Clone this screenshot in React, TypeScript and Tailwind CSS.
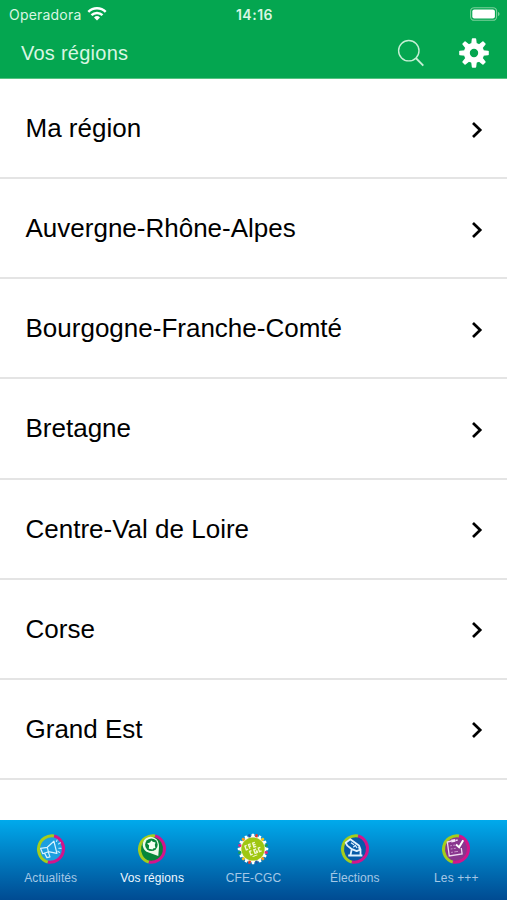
import type { ReactNode } from "react";

const regions = [
  "Ma région",
  "Auvergne-Rhône-Alpes",
  "Bourgogne-Franche-Comté",
  "Bretagne",
  "Centre-Val de Loire",
  "Corse",
  "Grand Est",
];

// Two-tone ring shared by most of the tab icons
function Ring({ fill, children }: { fill?: string; children: ReactNode }) {
  return (
    <svg viewBox="0 0 32 32" className="size-8" fill="none">
      {fill && <circle cx="16" cy="16" r="12.5" fill={fill} />}
      <path d="M19.1 2.9A13.5 13.5 0 0 0 12.9 29.1" stroke="#a5cd1c" strokeWidth="3" />
      <path d="M19.1 2.9A13.5 13.5 0 0 1 12.9 29.1" stroke="#d3148b" strokeWidth="3" />
      {children}
    </svg>
  );
}

function NewsIcon() {
  return (
    <Ring fill="#1c9fe0">
      <path
        d="m5.6 15.4 6.7-1.1 6.6-6.1 3 12.2-8.5-1.7-5.6 2zM9.3 19.6l2.6 5 3.1-.7-1.7-4.8M12.3 14.3l1.1 4.4"
        stroke="#d7f3ff"
        strokeWidth="1.2"
        strokeLinejoin="round"
      />
      <path
        d="m21.4 8.5.7-1.5M23.5 11l2-1.2M23.8 15.2l2.2.2M22.8 18.2l1.8 1.3"
        stroke="#b9e7fb"
        strokeWidth="1.1"
        strokeLinecap="round"
      />
    </Ring>
  );
}

function RegionsIcon() {
  return (
    <Ring fill="#07863a">
      <path
        d="M22.3 22.9 12 19.3A8 8 0 1 1 22.5 10c1 2.5.3 5.5-.2 12.9Z"
        fill="#eefae9"
      />
      <circle cx="15.4" cy="11.8" r="6.3" fill="#07863a" />
      <path
        d="m15.3 7.5 1.5 1.3 2.8.8-.8 2.2.6 3.2-2.3.4-.5 1.1-3.8-.7.3-3.5-2-1.8 2.9-.9z"
        fill="#f4fff2"
      />
    </Ring>
  );
}

const beads = [
  "#ffffff", "#e63a2e", "#ffffff", "#f6c51c", "#ffffff", "#1ba04c",
  "#ffffff", "#e5267d", "#ffffff", "#f59a1c", "#ffffff", "#1d56a5",
];

function UnionIcon() {
  return (
    <svg viewBox="0 0 32 32" className="size-8" fill="none">
      <circle cx="16" cy="16" r="13.4" fill="#f3f5dd" />
      {Array.from({ length: 24 }, (_, i) => (
        <rect
          key={i}
          x="14.7"
          y="0.8"
          width="2.5"
          height="3.1"
          rx="0.5"
          fill={beads[i % beads.length]}
          transform={`rotate(${i * 15} 16 16)`}
        />
      ))}
      <circle cx="16" cy="16" r="11.6" fill="#9fc712" />
      <g transform="rotate(-20 16 16)" stroke="#f4f8d4" strokeWidth="1.3">
        <path d="M11.2 10.5H9.4v4h2M13.2 14.8v-4.4h2.3M13.2 12.5h2M20 10.4h-2.4v4.2H20M17.6 12.5H20" />
        <path d="M14 17h-2v3.8h2M19 17h-2.5v3.8H19v-1.7h-1.2M23.4 17h-2.2v3.8h2.2" />
        <path d="M13 23h5" strokeWidth="1" />
      </g>
    </svg>
  );
}

function VoteIcon() {
  return (
    <Ring fill="#075aa8">
      <path
        d="M9.2 22.5h14.2M11.5 22l1.2-5.5M21.5 22v-5.6l-2-2.2M6.7 9.7l4.6-3.5 8.6 6.2 1.6 4.1-3.8 1.6-4.8-1.9-4.6-3.6z"
        stroke="#e0f1ff"
        strokeWidth="1.8"
        strokeLinejoin="round"
      />
      <path d="m12 9.8 3 2M14.3 14.2l2-1.7 1.8 2.5" stroke="#e0f1ff" strokeWidth="1.2" />
    </Ring>
  );
}

function MoreIcon() {
  return (
    <Ring fill="#89358e">
      <path
        d="M11.4 8 7.3 9l2 14 12.8-2-.8-6M15.5 7.5l2.2-.5"
        stroke="#eed9f0"
        strokeWidth="1.3"
      />
      <path d="m11 6.8 4-.7.4 2.7-4 .6z" fill="#f5e4f6" />
      <path d="m10.2 12.8 1.8-.2M13.2 12.3l2-.2M10.7 16l1.8-.2M13.8 15.5l2-.2M11.1 19.4l1.8-.2M14.3 18.9l3.7-.5" stroke="#c694ca" />
      <path d="m16 11.6 3.1 2.7 4.1-7" stroke="#fff" strokeWidth="2" />
    </Ring>
  );
}

const tabs = [
  { label: "Actualités", icon: <NewsIcon /> },
  { label: "Vos régions", icon: <RegionsIcon />, active: true },
  { label: "CFE-CGC", icon: <UnionIcon /> },
  { label: "Élections", icon: <VoteIcon /> },
  { label: "Les +++", icon: <MoreIcon /> },
];

function StatusBar() {
  return (
    <div className="grid h-7 grid-cols-3 items-center pl-[9px] pr-[7px] font-['Inter',sans-serif] text-[#d9f6e3]">
      <div className="flex items-center gap-[6px] text-[14px] tracking-[0.2px]">
        <span>Operadora</span>
        <svg viewBox="0 0 20 15" className="mb-[2px] h-[15px] w-5" fill="none" stroke="#fff" strokeWidth="2.5">
          <path d="M1.3 5.8a12.5 12.5 0 0 1 17.4 0M4.5 9.2a7.9 7.9 0 0 1 11 0" />
          <path d="m10 14.4-3-3a4.3 4.3 0 0 1 6 0z" fill="#fff" stroke="none" />
        </svg>
      </div>
      <span className="text-center text-[14px] font-semibold tracking-[0.5px]">14:16</span>
      <svg viewBox="0 0 30 14" className="h-[14px] w-[30px] justify-self-end" fill="none">
        <rect x="0.6" y="0.7" width="26" height="12.6" rx="3.6" stroke="#7bd09b" strokeWidth="1.1" />
        <rect x="2.3" y="2.4" width="22.6" height="9.2" rx="2" fill="#fff" />
        <path d="M28 5v4c2-.6 2-3.4 0-4Z" fill="#7bd09b" />
      </svg>
    </div>
  );
}

function Header() {
  return (
    <header className="h-[79px] shrink-0 border-b border-[#55c381] bg-[#04a650]">
      <StatusBar />
      <div className="flex h-[49px] items-center pl-[21px] pr-[18px]">
        <h1 className="flex-1 text-[20px] leading-6 tracking-[0.25px] text-[#d9f6e3]">Vos régions</h1>
        <button aria-label="Rechercher" className="mr-[34px]">
          <svg viewBox="0 0 28 28" className="size-7" fill="none" stroke="#c5efd4" strokeWidth="1.4">
            <circle cx="11.8" cy="11.7" r="10.2" />
            <path d="m18.8 19 7.5 7.6" strokeWidth="1.8" />
          </svg>
        </button>
        <button aria-label="Réglages">
          <svg viewBox="0 0 30 30" className="size-[30px]">
            <g fill="#fff">
              {[0, 45, 90, 135, 180, 225, 270, 315].map((a) => (
                <path key={a} d="M12.2 6 12.8.9Q12.9.2 13.6.2h2.8q.7 0 .8.7l.6 5.1z" transform={`rotate(${a} 15 15)`} />
              ))}
            </g>
            <circle cx="15" cy="15" r="7.2" fill="none" stroke="#fff" strokeWidth="6" />
          </svg>
        </button>
      </div>
    </header>
  );
}

function RegionRow({ name }: { name: string }) {
  return (
    <li className="flex h-[100.15px] items-center border-b-2 border-[#e4e4e4] pl-[25.5px] pr-[24px]">
      <span className="flex-1 text-[26px] leading-8">{name}</span>
      <svg viewBox="0 0 12 18" className="mt-[3px] h-[18px] w-3" fill="none" stroke="#000" strokeWidth="2.7">
        <path d="m2 2 7.2 7L2 16" />
      </svg>
    </li>
  );
}

export default function App() {
  return (
    <div className="flex h-[900px] w-[507px] flex-col overflow-hidden bg-white font-['Liberation_Sans',Arial,sans-serif] text-black">
      <Header />
      <ul className="min-h-0 flex-1">
        {regions.map((name) => (
          <RegionRow key={name} name={name} />
        ))}
      </ul>
      <nav className="grid h-[80px] shrink-0 grid-cols-5 bg-linear-to-b from-[#00aaec] to-[#004b92]">
        {tabs.map((tab) => (
          <button key={tab.label} className="flex flex-col items-center pt-[13px]">
            {tab.icon}
            <span
              className={
                tab.active
                  ? "mt-[5px] text-[12px] leading-4 tracking-[0.1px] whitespace-nowrap text-[#eff8ff]"
                  : "mt-[5px] text-[12px] leading-4 tracking-[0.1px] whitespace-nowrap text-[#a5c8e6]"
              }
            >
              {tab.label}
            </span>
          </button>
        ))}
      </nav>
    </div>
  );
}
